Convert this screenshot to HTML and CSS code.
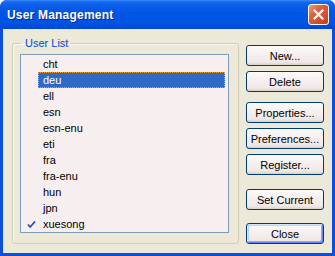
FILE: index.html
```html
<!DOCTYPE html>
<html lang="en">
  <head>
    <meta charset="UTF-8" />
    <title>User Management</title>
    <link rel="stylesheet" href="styles.css">
  </head>
  <body>
    <div class="window">
      <div class="titlebar">
        <span class="title">User Management</span>
        <button class="close-x" aria-label="Close">
          <svg width="11" height="11" viewBox="0 0 11 11">
            <path d="M1.5 1.5 L9.5 9.5 M9.5 1.5 L1.5 9.5" stroke="#fff" stroke-width="2.2" stroke-linecap="square" />
          </svg>
        </button>
      </div>

      <div class="content">
        <fieldset class="group">
          <legend>User List</legend>
          <ul class="listbox">
            <li><span class="mark"></span><span class="name">cht</span></li>
            <li class="selected"><span class="mark"></span><span class="name">deu</span></li>
            <li><span class="mark"></span><span class="name">ell</span></li>
            <li><span class="mark"></span><span class="name">esn</span></li>
            <li><span class="mark"></span><span class="name">esn-enu</span></li>
            <li><span class="mark"></span><span class="name">eti</span></li>
            <li><span class="mark"></span><span class="name">fra</span></li>
            <li><span class="mark"></span><span class="name">fra-enu</span></li>
            <li><span class="mark"></span><span class="name">hun</span></li>
            <li><span class="mark"></span><span class="name">jpn</span></li>
            <li>
              <span class="mark">
                <svg width="9" height="9" viewBox="0 0 9 9">
                  <path d="M1 4.5 L3.2 7 L8 1.5" fill="none" stroke="#1f4fc4" stroke-width="1.8" />
                </svg>
              </span>
              <span class="name">xuesong</span>
            </li>
          </ul>
        </fieldset>

        <div class="buttons">
          <button class="btn">New...</button>
          <button class="btn">Delete</button>
          <button class="btn gap-sm">Properties...</button>
          <button class="btn">Preferences...</button>
          <button class="btn">Register...</button>
          <button class="btn gap-lg">Set Current</button>
          <button class="btn default">Close</button>
        </div>
      </div>
    </div>
  </body>
</html>
```

FILE: styles.css
```css
* {
  margin: 0;
  padding: 0;
  box-sizing: border-box;
  font-family: "Liberation Sans", Arial, sans-serif;
}

body {
  width: 335px;
  height: 256px;
  background: #ffffff;
}

.window {
  width: 335px;
  height: 256px;
  display: flex;
  flex-direction: column;
  border-radius: 7px 7px 0 0;
  background: #0a4fde;
  overflow: hidden;
}

.titlebar {
  height: 29px;
  display: flex;
  align-items: center;
  justify-content: space-between;
  padding: 0 6px 0 7px;
  background: linear-gradient(
    #3a8cfa 0,
    #1469ef 2px,
    #0a5ce9 6px,
    #0055e5 14px,
    #0153e2 24px,
    #0045d2 29px
  );
}

.title {
  color: #fff;
  font-weight: bold;
  font-size: 12px;
  letter-spacing: 0.2px;
  text-shadow: 1px 1px 0 #0d2a86;
  padding-top: 1px;
}

.close-x {
  width: 21px;
  height: 21px;
  display: flex;
  align-items: center;
  justify-content: center;
  border: 1px solid #fff;
  border-radius: 3px;
  background: linear-gradient(135deg, #ec9f82 0, #e0603e 35%, #c93d1c 100%);
}

.content {
  flex: 1;
  display: flex;
  align-items: flex-start;
  margin: 0 3px 3px 3px;
  padding: 8px 8px 0 9px;
  background: #ece9d8;
}

.group {
  width: 227px;
  height: 207px;
  border: 1px solid #d0cdbc;
  border-radius: 3px;
  padding: 4px 9px 0 7px;
  box-shadow: inset 1px 1px 0 #f8f7f1;
}

.group legend {
  margin-left: 1px;
  padding: 0 2px 0 4px;
  color: #0046d5;
  font-size: 11px;
  line-height: 13px;
}

.listbox {
  list-style: none;
  width: 209px;
  height: 179px;
  border: 1px solid #7f9db9;
  background: #f7efef;
  padding-top: 1px;
}

.listbox li {
  display: flex;
  height: 16px;
}

.mark {
  width: 17px;
  display: flex;
  align-items: center;
  justify-content: flex-end;
  padding-right: 2px;
}

.name {
  width: 187px;
  padding-left: 4px;
  border: 1px dotted transparent;
  font-size: 11px;
  line-height: 14px;
  color: #000;
}

.selected .name {
  background: #316ac5;
  color: #fff;
  border-color: #f0a030;
}

.buttons {
  display: flex;
  flex-direction: column;
  margin-left: 7px;
  padding-top: 8px;
}

.btn {
  width: 78px;
  height: 21px;
  margin-bottom: 5px;
  border: 1px solid #003c74;
  border-radius: 3px;
  background: linear-gradient(#fdfafa 0, #f7f0f0 40%, #f0e8e6 85%, #d8d0c4 100%);
  font-size: 11px;
  color: #000;
}

.btn.gap-sm {
  margin-top: 5px;
}

.btn.gap-lg {
  margin-top: 9px;
}

.btn.default {
  margin-top: 8px;
  box-shadow: inset 1px 1px 0 #cee7ff, inset -1px -1px 0 #6982ee, inset 2px 2px 0 #bcd4f6, inset -2px -2px 0 #89adef;
}
```
